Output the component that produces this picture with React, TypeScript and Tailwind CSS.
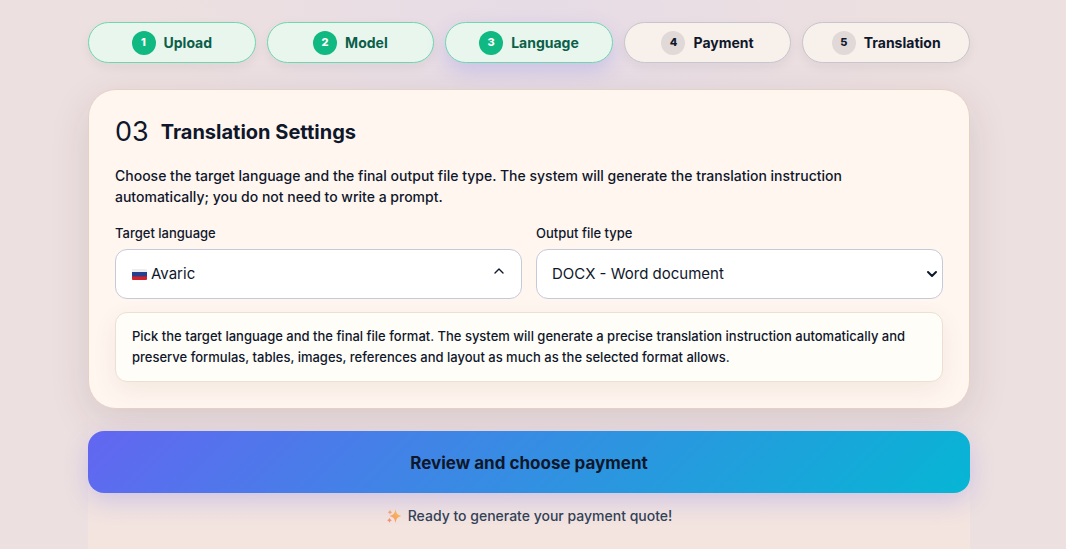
import { useState } from "react";
import { ChevronDown, ChevronUp } from "lucide-react";
import clsx from "clsx";

const steps = ["Upload", "Model", "Language", "Payment", "Translation"];
const currentStep = 3;

function StepPill({ number, label }: { number: number; label: string }) {
  const done = number <= currentStep;

  return (
    <li
      className={clsx(
        "flex flex-1 items-center justify-center gap-2 rounded-full border py-2 h-[41px]",
        done ? "border-[#6fd6b0] bg-[#e9f6ee] text-[#0b5f49]" : "border-[#c6c6cc] bg-[#f8f0eb] text-slate-900",
        number === currentStep
          ? "shadow-[0_8px_20px_rgba(99,102,241,0.22)]"
          : "shadow-[0_4px_12px_rgba(15,23,42,0.06)]"
      )}
    >
      <span
        className={clsx(
          "flex h-6 w-6 items-center justify-center rounded-full text-[11px] font-extrabold",
          done ? "bg-[#10b981] text-white" : "bg-[#e1d9d7] text-slate-900"
        )}
      >
        {number}
      </span>
      <span className="text-sm font-bold">{label}</span>
    </li>
  );
}

function RussianFlag() {
  return (
    <svg width="15" height="11" viewBox="0 0 15 11" aria-hidden="true">
      <rect width="15" height="11" rx="1" fill="#eeeeee" />
      <rect y="3" width="15" height="5" fill="#25408f" />
      <path d="M0 7.5h15V10a1 1 0 0 1-1 1H1a1 1 0 0 1-1-1z" fill="#d32029" />
    </svg>
  );
}

function Sparkles() {
  return (
    <svg width="16" height="16" viewBox="0 0 16 16" aria-hidden="true">
      <defs>
        <linearGradient id="spark" x1="0" y1="1" x2="1" y2="0">
          <stop offset="0" stopColor="#f58f6c" />
          <stop offset="1" stopColor="#fbc750" />
        </linearGradient>
      </defs>
      <path d="M9.500 1c.8 4.500 1.900 5.900 6 7-4.100 1.100-5.200 2.500-6 7-.8-4.500-1.900-5.900-6-7 4.100-1.100 5.200-2.500 6-7z" fill="url(#spark)" />
      <path d="M4 1.500c.3 1.700.8 2.200 2.300 2.700C4.800 4.700 4.300 5.200 4 7c-.3-1.800-.8-2.300-2.300-2.800C3.200 3.700 3.700 3.200 4 1.500z" fill="#f7a07c" />
      <path d="M3.500 9.500c.3 1.700.9 2.200 2.500 2.700-1.600.5-2.200 1-2.500 2.800-.3-1.800-.9-2.300-2.500-2.800 1.600-.5 2.200-1 2.500-2.700z" fill="#f58f6c" />
    </svg>
  );
}

export default function App() {
  const [open, setOpen] = useState(true);
  const [format, setFormat] = useState("docx");

  return (
    <div className="flex min-h-screen flex-col overflow-hidden bg-[#ede0e0] bg-[radial-gradient(circle_at_50%_0%,#e6dce6_0%,#ede0e0_50%)] pl-[88px] pr-24 pt-[22px] font-['Inter','Liberation_Sans',sans-serif] text-slate-900">
      <ol className="flex gap-[11px]">
        {steps.map((label, i) => (
          <StepPill key={label} number={i + 1} label={label} />
        ))}
      </ol>

      <main className="mt-[26px] rounded-[28px] border border-[#e6d2c4] bg-[#fff6f0] p-[26px] shadow-[0_12px_40px_rgba(60,30,50,0.12)]">
        <div className="flex items-center gap-3 leading-8">
          <span className="text-[27px]">03</span>
          <h1 className="text-xl font-bold">Translation Settings</h1>
        </div>

        <p className="mt-[17px] max-w-[800px] text-sm font-medium leading-[21px]">
          Choose the target language and the final output file type. The system will generate the translation instruction
          automatically; you do not need to write a prompt.
        </p>

        <div className="mt-4 grid grid-cols-2 gap-3.5">
          <div>
            <label htmlFor="language" className="block text-[13px] font-medium leading-5">
              Target language
            </label>
            <button
              id="language"
              type="button"
              aria-expanded={open}
              onClick={() => setOpen(!open)}
              className="mt-1.5 flex h-[50px] w-full items-center justify-between rounded-xl border border-[#c5cad9] bg-white pl-4 pr-3.5 text-[15px]"
            >
              <span className="flex items-center gap-1">
                <RussianFlag />
                Avaric
              </span>
              <ChevronUp size={16} className="mb-1.5" />
            </button>
          </div>
          <div>
            <label htmlFor="format" className="block text-[13px] font-medium leading-5">
              Output file type
            </label>
            <div className="relative mt-1.5">
              <select
                id="format"
                value={format}
                onChange={(e) => setFormat(e.target.value)}
                className="block h-[50px] w-full appearance-none rounded-xl border border-[#c5cad9] bg-white pl-[15px] pr-6 text-[15px]"
              >
                <option value="docx">DOCX - Word document</option>
                <option value="pdf">PDF - Document</option>
              </select>
              <ChevronDown
                size={16}
                strokeWidth={3}
                className="pointer-events-none absolute inset-y-0 right-[3px] my-auto"
              />
            </div>
          </div>
        </div>

        <p className="mt-[13px] rounded-xl border border-[#ecdfd3] bg-[#fffdf8] px-4 py-[13px] text-[13px] font-medium leading-[21px] shadow-[0_8px_24px_rgba(120,80,40,0.08)]">
          Pick the target language and the final file format. The system will generate a precise translation instruction
          automatically and preserve formulas, tables, images, references and layout as much as the selected format
          allows.
        </p>
      </main>

      {/* Action bar */}
      <footer className="flex-1 bg-linear-to-b from-transparent to-[#f4e5df] pt-[22px] pb-6 text-center">
        <button
          type="button"
          className="h-[62px] w-full rounded-2xl bg-[linear-gradient(135deg,#6366f1,#06b6d4)] pt-1 text-[17px] font-bold shadow-[0_8px_24px_rgba(99,102,241,0.24)]"
        >
          Review and choose payment
        </button>
        <p className="mt-[13px] flex items-center justify-center gap-1.5 text-sm font-medium text-slate-700">
          <Sparkles />
          Ready to generate your payment quote!
        </p>
      </footer>
    </div>
  );
}
